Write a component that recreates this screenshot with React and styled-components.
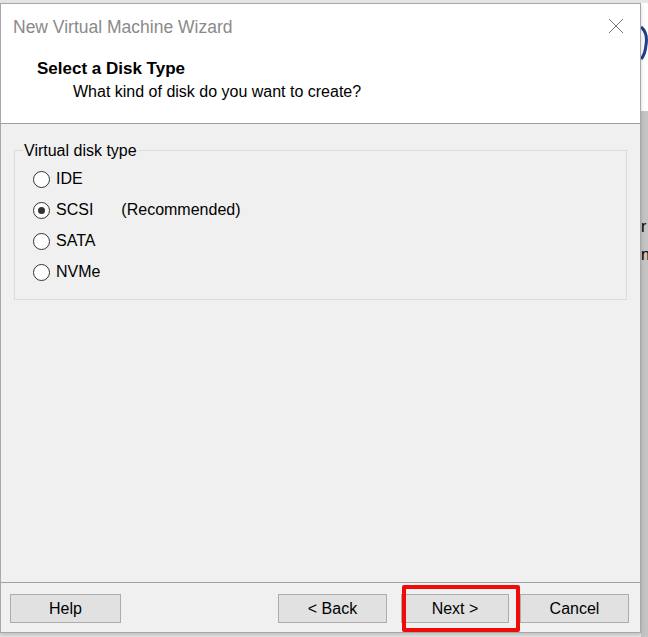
import styled, { createGlobalStyle } from "styled-components"

const GlobalStyle = createGlobalStyle`
  *, *::before, *::after {
    box-sizing: border-box;
  }
  html, body {
    margin: 0;
    padding: 0;
    background: #e6e6e6;
  }
  body {
    font-family: "Liberation Sans", Arial, sans-serif;
    color: #000;
  }
`

const Page = styled.div`
  display: flex;
  width: 648px;
  height: 637px;
  overflow: hidden;
  padding-top: 3px;
`

const Window = styled.div`
  position: relative;
  width: 641px;
  height: 630px;
  flex-shrink: 0;
  border: 1px solid #a8a8a8;
  background: #f0f0f0;
  display: flex;
  flex-direction: column;
  box-shadow: 0 2px 4px rgba(0, 0, 0, 0.18);
`

const TitleBar = styled.div`
  height: 45px;
  flex-shrink: 0;
  background: #fff;
  display: flex;
  align-items: center;
  justify-content: space-between;
  padding: 0 16px 0 12px;
`

const Title = styled.div`
  font-size: 17.5px;
  color: #8a8a8a;
  margin-top: 1px;
`

const CloseIcon = styled.svg`
  width: 16px;
  height: 16px;
  margin-top: -1px;
`

const Header = styled.div`
  height: 75px;
  flex-shrink: 0;
  background: #fff;
  border-bottom: 1px solid #a0a0a0;
  padding: 9px 0 0 36px;
`

const HeaderTitle = styled.div`
  font-size: 17px;
  font-weight: bold;
  line-height: 22px;
`

const HeaderSub = styled.div`
  font-size: 16px;
  line-height: 23px;
  padding-left: 36px;
`

const Body = styled.div`
  flex: 1;
  padding: 16px 13px 0 13px;
`

const GroupBox = styled.fieldset`
  margin: 0;
  border: 1px solid #dcdcdc;
  padding: 9px 8px 14px 18px;
  height: 160px;
  display: flex;
  flex-direction: column;
  gap: 11px;
`

const Legend = styled.legend`
  font-size: 16px;
  padding: 2px 1px 0 1px;
  margin-left: -10px;
  line-height: 18px;
`

const Option = styled.label`
  display: flex;
  align-items: center;
  height: 20px;
  font-size: 16px;
`

const Radio = styled.span`
  width: 17px;
  height: 17px;
  border-radius: 50%;
  border: 1px solid #333;
  background: #fff;
  display: flex;
  align-items: center;
  justify-content: center;
  margin-right: 6px;
  flex-shrink: 0;

  &::after {
    content: "";
    width: 7px;
    height: 7px;
    border-radius: 50%;
    background: ${(p) => (p.$checked ? "#333" : "transparent")};
  }
`

const Note = styled.span`
  margin-left: 28px;
`

const Footer = styled.div`
  position: relative;
  height: 50px;
  flex-shrink: 0;
  border-top: 1px solid #a0a0a0;
  display: flex;
  align-items: flex-start;
  padding: 11px 9px 0 9px;
`

const Button = styled.button`
  width: ${(p) => p.$w}px;
  height: 29px;
  flex-shrink: 0;
  background: #e1e1e1;
  border: 1px solid #adadad;
  font-family: "Liberation Sans", Arial, sans-serif;
  font-size: 16px;
  color: #000;
  padding: 0;
  margin-right: ${(p) => p.$gap || 0}px;
  cursor: default;
`

const Highlight = styled.div`
  position: absolute;
  left: 401px;
  top: 2px;
  width: 118px;
  height: 47px;
  border: 4px solid #f00a0a;
  border-radius: 2px;
  pointer-events: none;
`

const Side = styled.div`
  flex: 1;
  display: flex;
  flex-direction: column;
`

const SideTop = styled.div`
  height: 108px;
  background: #fff;
  display: flex;
  padding-top: 22px;
`

const SideRest = styled.div`
  flex: 1;
  background: #c4c4c4;
  font-size: 16px;
  line-height: 28px;
  padding-top: 102px;
  overflow: hidden;
  white-space: nowrap;
`

export default function App() {
  const options = [
    { label: "IDE" },
    { label: "SCSI", checked: true, note: "(Recommended)" },
    { label: "SATA" },
    { label: "NVMe" },
  ]

  return (
    <>
      <GlobalStyle />
      <Page>
        <Window>
          <TitleBar>
            <Title>New Virtual Machine Wizard</Title>
            <CloseIcon viewBox="0 0 16 16">
              <path d="M1 1 L15 15 M15 1 L1 15" stroke="#777" strokeWidth="1" fill="none" />
            </CloseIcon>
          </TitleBar>
          <Header>
            <HeaderTitle>Select a Disk Type</HeaderTitle>
            <HeaderSub>What kind of disk do you want to create?</HeaderSub>
          </Header>
          <Body>
            <GroupBox>
              <Legend>Virtual disk type</Legend>
              {options.map((o) => (
                <Option key={o.label}>
                  <Radio $checked={o.checked} />
                  {o.label}
                  {o.note && <Note>{o.note}</Note>}
                </Option>
              ))}
            </GroupBox>
          </Body>
          <Footer>
            <Button $w={111} $gap={157}>Help</Button>
            <Button $w={109} $gap={14}>&lt; Back</Button>
            <Button $w={108} $gap={11}>Next &gt;</Button>
            <Button $w={109}>Cancel</Button>
            <Highlight />
          </Footer>
        </Window>
        <Side>
          <SideTop>
            <svg width="7" height="36" viewBox="0 0 7 36">
              <path d="M0 2 Q7 8 5 20 Q4 30 0 34" stroke="#1e3f8a" strokeWidth="3" fill="none" />
            </svg>
          </SideTop>
          <SideRest>
            <div>r</div>
            <div>n</div>
          </SideRest>
        </Side>
      </Page>
    </>
  )
}
